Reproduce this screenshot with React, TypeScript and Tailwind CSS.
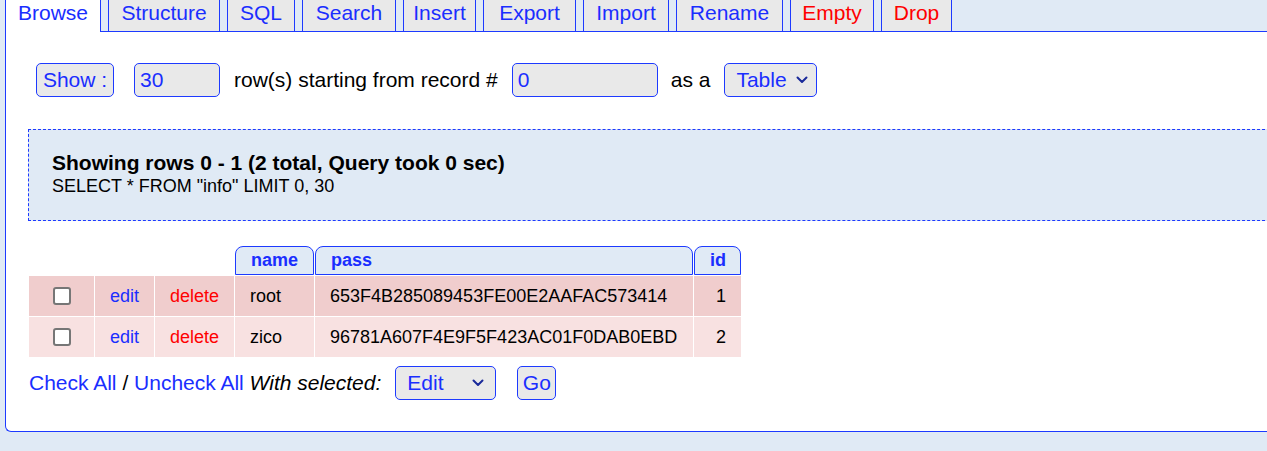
const tabs = [
  { label: "Browse", w: "w-[96px]", active: true, red: false },
  { label: "Structure", w: "w-[112px]", active: false, red: false },
  { label: "SQL", w: "w-[68px]", active: false, red: false },
  { label: "Search", w: "w-[94px]", active: false, red: false },
  { label: "Insert", w: "w-[73px]", active: false, red: false },
  { label: "Export", w: "w-[93px]", active: false, red: false },
  { label: "Import", w: "w-[86px]", active: false, red: false },
  { label: "Rename", w: "w-[107px]", active: false, red: false },
  { label: "Empty", w: "w-[84px]", active: false, red: true },
  { label: "Drop", w: "w-[71px]", active: false, red: true },
];

const rows = [
  { name: "root", pass: "653F4B285089453FE00E2AAFAC573414", id: 1, bg: "bg-[#f0cdcd]" },
  { name: "zico", pass: "96781A607F4E9F5F423AC01F0DAB0EBD", id: 2, bg: "bg-[#f8e1e1]" },
];

function Chevron() {
  return (
    <svg width="12" height="8" viewBox="0 0 12 8" className="shrink-0">
      <polyline points="1.5,1.5 6,6 10.5,1.5" fill="none" stroke="#1a2a9a" strokeWidth="2" strokeLinecap="round" strokeLinejoin="round" />
    </svg>
  );
}

function Checkbox() {
  return <span className="block w-[18px] h-[18px] rounded-[3px] border-2 border-[#767676] bg-white" />;
}

export default function App() {
  return (
    <div className="w-[1267px] h-[451px] overflow-hidden bg-[#e0eaf5] pl-[5px] font-['Liberation_Sans',Arial,sans-serif] text-black">
      {/* tabs */}
      <div className="flex items-start gap-[7px] h-[31px]">
        {tabs.map((t) => (
          <div
            key={t.label}
            className={
              t.active
                ? `${t.w} h-[32px] relative z-10 bg-white border-x border-[#1d3aff] text-[#1a2eff] text-[21px] leading-[24px] pt-[1px] text-center`
                : `${t.w} h-[31px] bg-[#e9e9e9] border-x border-[#1d3aff] text-[21px] leading-[24px] pt-[1px] text-center ${t.red ? "text-[#ff0000]" : "text-[#1a2eff]"}`
            }
          >
            {t.label}
          </div>
        ))}
      </div>

      {/* panel */}
      <div className="w-[1300px] h-[401px] bg-white border border-r-0 border-[#1d3aff] rounded-bl-[6px]">
        {/* show row */}
        <div className="flex items-center h-[34px] mt-[31px] ml-[30px] text-[21px]">
          <button className="w-[78px] h-[34px] rounded-[5px] border border-[#1d3aff] bg-[#e9e9e9] text-[#1a2eff]">Show :</button>
          <div className="ml-[20px] w-[86px] h-[34px] rounded-[5px] border border-[#1d3aff] bg-[#e9e9e9] text-[#1a2eff] pl-[5px] flex items-center">30</div>
          <span className="ml-[14px]">row(s) starting from record #</span>
          <div className="ml-[14px] w-[146px] h-[34px] rounded-[5px] border border-[#1d3aff] bg-[#e9e9e9] text-[#1a2eff] pl-[5px] flex items-center">0</div>
          <span className="ml-[13px]">as a</span>
          <div className="ml-[14px] w-[93px] h-[34px] rounded-[5px] border border-[#1d3aff] bg-[#e9e9e9] text-[#1a2eff] pl-[11px] pr-[8px] flex items-center justify-between">
            <span>Table</span>
            <Chevron />
          </div>
        </div>

        {/* query info */}
        <div className="mt-[32px] ml-[22px] h-[92px] border border-dashed border-[#1d3aff] bg-[#e0eaf5] pl-[23px] pt-[21px]">
          <div className="text-[21px] leading-[24px] font-bold">Showing rows 0 - 1 (2 total, Query took 0 sec)</div>
          <div className="text-[18px] leading-[21px] mt-[1px]">SELECT * FROM "info" LIMIT 0, 30</div>
        </div>

        {/* table */}
        <div className="mt-[25px] ml-[23px] grid grid-cols-[65px_59px_79px_79px_378px_47px] grid-rows-[29px_40px_40px] gap-[1px] text-[18px]">
          <div />
          <div />
          <div />
          {["name", "pass", "id"].map((h) => (
            <div key={h} className="rounded-t-[8px] border border-[#1d3aff] bg-[#e0eaf5] text-[#1a2eff] font-bold pl-[15px] flex items-center">
              {h}
            </div>
          ))}
          {rows.map((r) => (
            <div key={r.id} className="contents">
              <div className={`${r.bg} flex items-center justify-center`}>
                <Checkbox />
              </div>
              <div className={`${r.bg} flex items-center justify-center text-[#1a2eff]`}>edit</div>
              <div className={`${r.bg} flex items-center justify-center text-[#ff0000]`}>delete</div>
              <div className={`${r.bg} flex items-center pl-[15px]`}>{r.name}</div>
              <div className={`${r.bg} flex items-center pl-[15px]`}>{r.pass}</div>
              <div className={`${r.bg} flex items-center justify-end pr-[15px]`}>{r.id}</div>
            </div>
          ))}
        </div>

        {/* with selected */}
        <div className="flex items-center mt-[9px] ml-[23px] h-[34px] text-[21px]">
          <span className="text-[#1a2eff]">Check All</span>
          <span className="whitespace-pre"> / </span>
          <span className="text-[#1a2eff]">Uncheck All</span>
          <span className="italic whitespace-pre"> With selected:</span>
          <div className="ml-[14px] w-[101px] h-[34px] rounded-[5px] border border-[#1d3aff] bg-[#e9e9e9] text-[#1a2eff] pl-[11px] pr-[11px] flex items-center justify-between">
            <span>Edit</span>
            <Chevron />
          </div>
          <button className="ml-[21px] w-[39px] h-[34px] rounded-[5px] border border-[#1d3aff] bg-[#e9e9e9] text-[#1a2eff]">Go</button>
        </div>
      </div>
    </div>
  );
}
